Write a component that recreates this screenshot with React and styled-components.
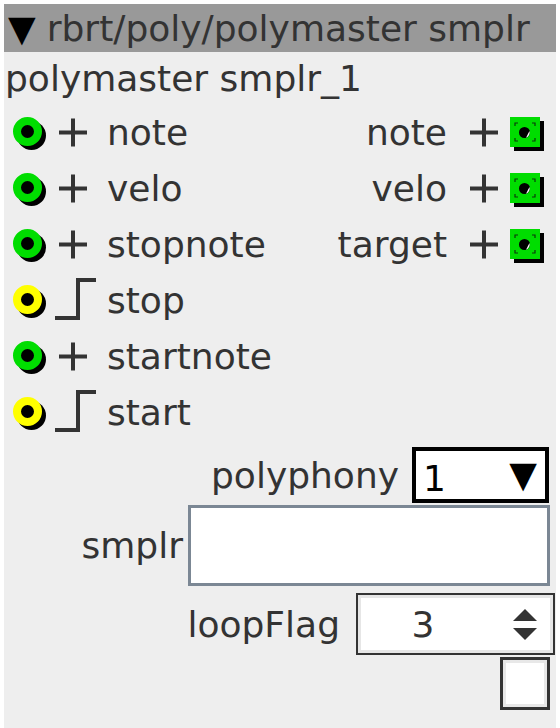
import React from "react";
import styled, { createGlobalStyle } from "styled-components";

const GlobalStyle = createGlobalStyle`
  html, body {
    margin: 0;
    padding: 0;
    background: #ffffff;
  }
  body {
    font-family: "DejaVu Sans", "Noto Sans", sans-serif;
  }
`;

const ports = [
  { label: "note", kind: "event", out: "note" },
  { label: "velo", kind: "event", out: "velo" },
  { label: "stopnote", kind: "event", out: "target" },
  { label: "stop", kind: "trigger" },
  { label: "startnote", kind: "event" },
  { label: "start", kind: "trigger" },
];

const InletDot = ({ color }) => (
  <svg width="40" height="40" viewBox="0 0 40 40">
    <circle cx="21.5" cy="23.5" r="14.5" fill="#000" />
    <circle cx="17.5" cy="19.5" r="10.5" fill="none" stroke={color} strokeWidth="8" />
  </svg>
);

const PlusSign = () => (
  <svg width="30" height="44" viewBox="0 0 30 44">
    <path d="M1 22.5 H29 M15 8.5 V36.5" stroke="#333" strokeWidth="4" fill="none" />
  </svg>
);

const StepSign = () => (
  <svg width="44" height="46" viewBox="0 0 44 46">
    <path d="M0 41 H23 V3 H41" stroke="#333" strokeWidth="4" fill="none" />
  </svg>
);

const OutletSquare = () => (
  <svg width="36" height="38" viewBox="0 0 36 38">
    <rect x="4" y="8" width="30" height="30" fill="#000" />
    <rect x="0" y="4" width="30" height="30" fill="#00dd00" />
    <path
      d="M5 13 V10 H8 M22 10 H25 V13 M5 25 V28 H8 M22 28 H25 V25"
      stroke="#0a3a0a"
      strokeWidth="1.2"
      fill="none"
    />
    <circle cx="14.5" cy="19.5" r="5.5" fill="#000" />
    <path d="M19.5 18 A5.5 5.5 0 0 1 16 24.8 Z" fill="#fff" />
  </svg>
);

const App = () => (
  <>
    <GlobalStyle />
    <Panel>
      <Header>
        <Caret>▼</Caret>
        rbrt/poly/polymaster smplr
      </Header>
      <Title>polymaster smplr_1</Title>
      {ports.map((p) => (
        <PortRow key={p.label}>
          <PortSide>
            <InletSlot>
              <InletDot color={p.kind === "event" ? "#00dd00" : "#ffff00"} />
            </InletSlot>
            <SignSlot $step={p.kind !== "event"}>
              {p.kind === "event" ? <PlusSign /> : <StepSign />}
            </SignSlot>
            <PortLabel>{p.label}</PortLabel>
          </PortSide>
          {p.out && (
            <PortSide>
              <PortLabel>{p.out}</PortLabel>
              <OutPlus>
                <PlusSign />
              </OutPlus>
              <OutletSquare />
            </PortSide>
          )}
        </PortRow>
      ))}

      <ControlRow $gap={13} $right={7} $top={7}>
        <ControlLabel>polyphony</ControlLabel>
        <Select>
          <SelectValue>1</SelectValue>
          <SelectArrow>▼</SelectArrow>
        </Select>
      </ControlRow>

      <ControlRow $gap={5} $right={6} $top={2}>
        <ControlLabel>smplr</ControlLabel>
        <TextBox readOnly value="" />
      </ControlRow>

      <ControlRow $gap={16} $right={1} $top={7}>
        <ControlLabel>loopFlag</ControlLabel>
        <NumberBox>
          <NumberValue>3</NumberValue>
          <Spinner width="24" height="40" viewBox="0 0 24 40">
            <polygon points="0,17 12,5 24,17" fill="#333" />
            <polygon points="0,24 24,24 12,36" fill="#333" />
          </Spinner>
        </NumberBox>
      </ControlRow>

      <ControlRow $gap={0} $right={6} $top={2}>
        <CheckBox />
      </ControlRow>
    </Panel>
  </>
);

const Panel = styled.div`
  width: 552px;
  height: 724px;
  margin: 4px 4px 0;
  background: #eeeeee;
  color: #333333;
  font-size: 36px;
  overflow: hidden;
`;

const Header = styled.div`
  height: 48px;
  background: #999999;
  display: flex;
  align-items: center;
  padding-left: 4px;
  white-space: nowrap;
`;

const Caret = styled.span`
  color: #000000;
  margin-right: 11px;
`;

const Title = styled.div`
  height: 52px;
  display: flex;
  align-items: center;
  padding-left: 1px;
  white-space: nowrap;
`;

const PortRow = styled.div`
  height: 56px;
  display: flex;
  align-items: center;
  justify-content: space-between;
  padding: 0 10px 0 6px;
`;

const PortSide = styled.div`
  display: flex;
  align-items: center;
`;

const InletSlot = styled.div`
  display: flex;
  width: 40px;
`;

const SignSlot = styled.div`
  display: flex;
  width: 44px;
  margin-left: 5px;
  padding-left: ${(p) => (p.$step ? 0 : 3)}px;
  box-sizing: border-box;
`;

const PortLabel = styled.span`
  margin-left: 8px;
  white-space: nowrap;
`;

const OutPlus = styled.div`
  display: flex;
  margin: 0 11px 0 22px;
`;

const ControlRow = styled.div`
  display: flex;
  justify-content: flex-end;
  align-items: center;
  gap: ${(p) => p.$gap}px;
  padding-right: ${(p) => p.$right}px;
  margin-top: ${(p) => p.$top}px;
`;

const ControlLabel = styled.span`
  white-space: nowrap;
`;

const Select = styled.div`
  width: 137px;
  height: 56px;
  box-sizing: border-box;
  border: 4px solid #000000;
  background: #ffffff;
  color: #000000;
  display: flex;
  justify-content: space-between;
  align-items: flex-end;
  padding: 0 8px 0 7px;
`;

const SelectValue = styled.span`
  line-height: 40px;
`;

const SelectArrow = styled.span`
  line-height: 40px;
  margin-bottom: 4px;
`;

const TextBox = styled.textarea`
  width: 362px;
  height: 81px;
  box-sizing: border-box;
  border: 3px solid #7b8794;
  background: #ffffff;
  resize: none;
  outline: none;
  margin: 0;
  padding: 0;
`;

const NumberBox = styled.div`
  width: 199px;
  height: 62px;
  box-sizing: border-box;
  border: 2px solid #333333;
  box-shadow: inset 0 0 0 3px #e6e6e6;
  background: #ffffff;
  display: flex;
  align-items: center;
`;

const NumberValue = styled.span`
  width: 130px;
  text-align: center;
  color: #333333;
`;

const Spinner = styled.svg`
  margin-left: auto;
  margin-right: 16px;
`;

const CheckBox = styled.div`
  width: 50px;
  height: 53px;
  box-sizing: border-box;
  border: 3px solid #333333;
  box-shadow: inset 0 0 0 3px #e8e8e8;
  background: #ffffff;
`;

export default App;
